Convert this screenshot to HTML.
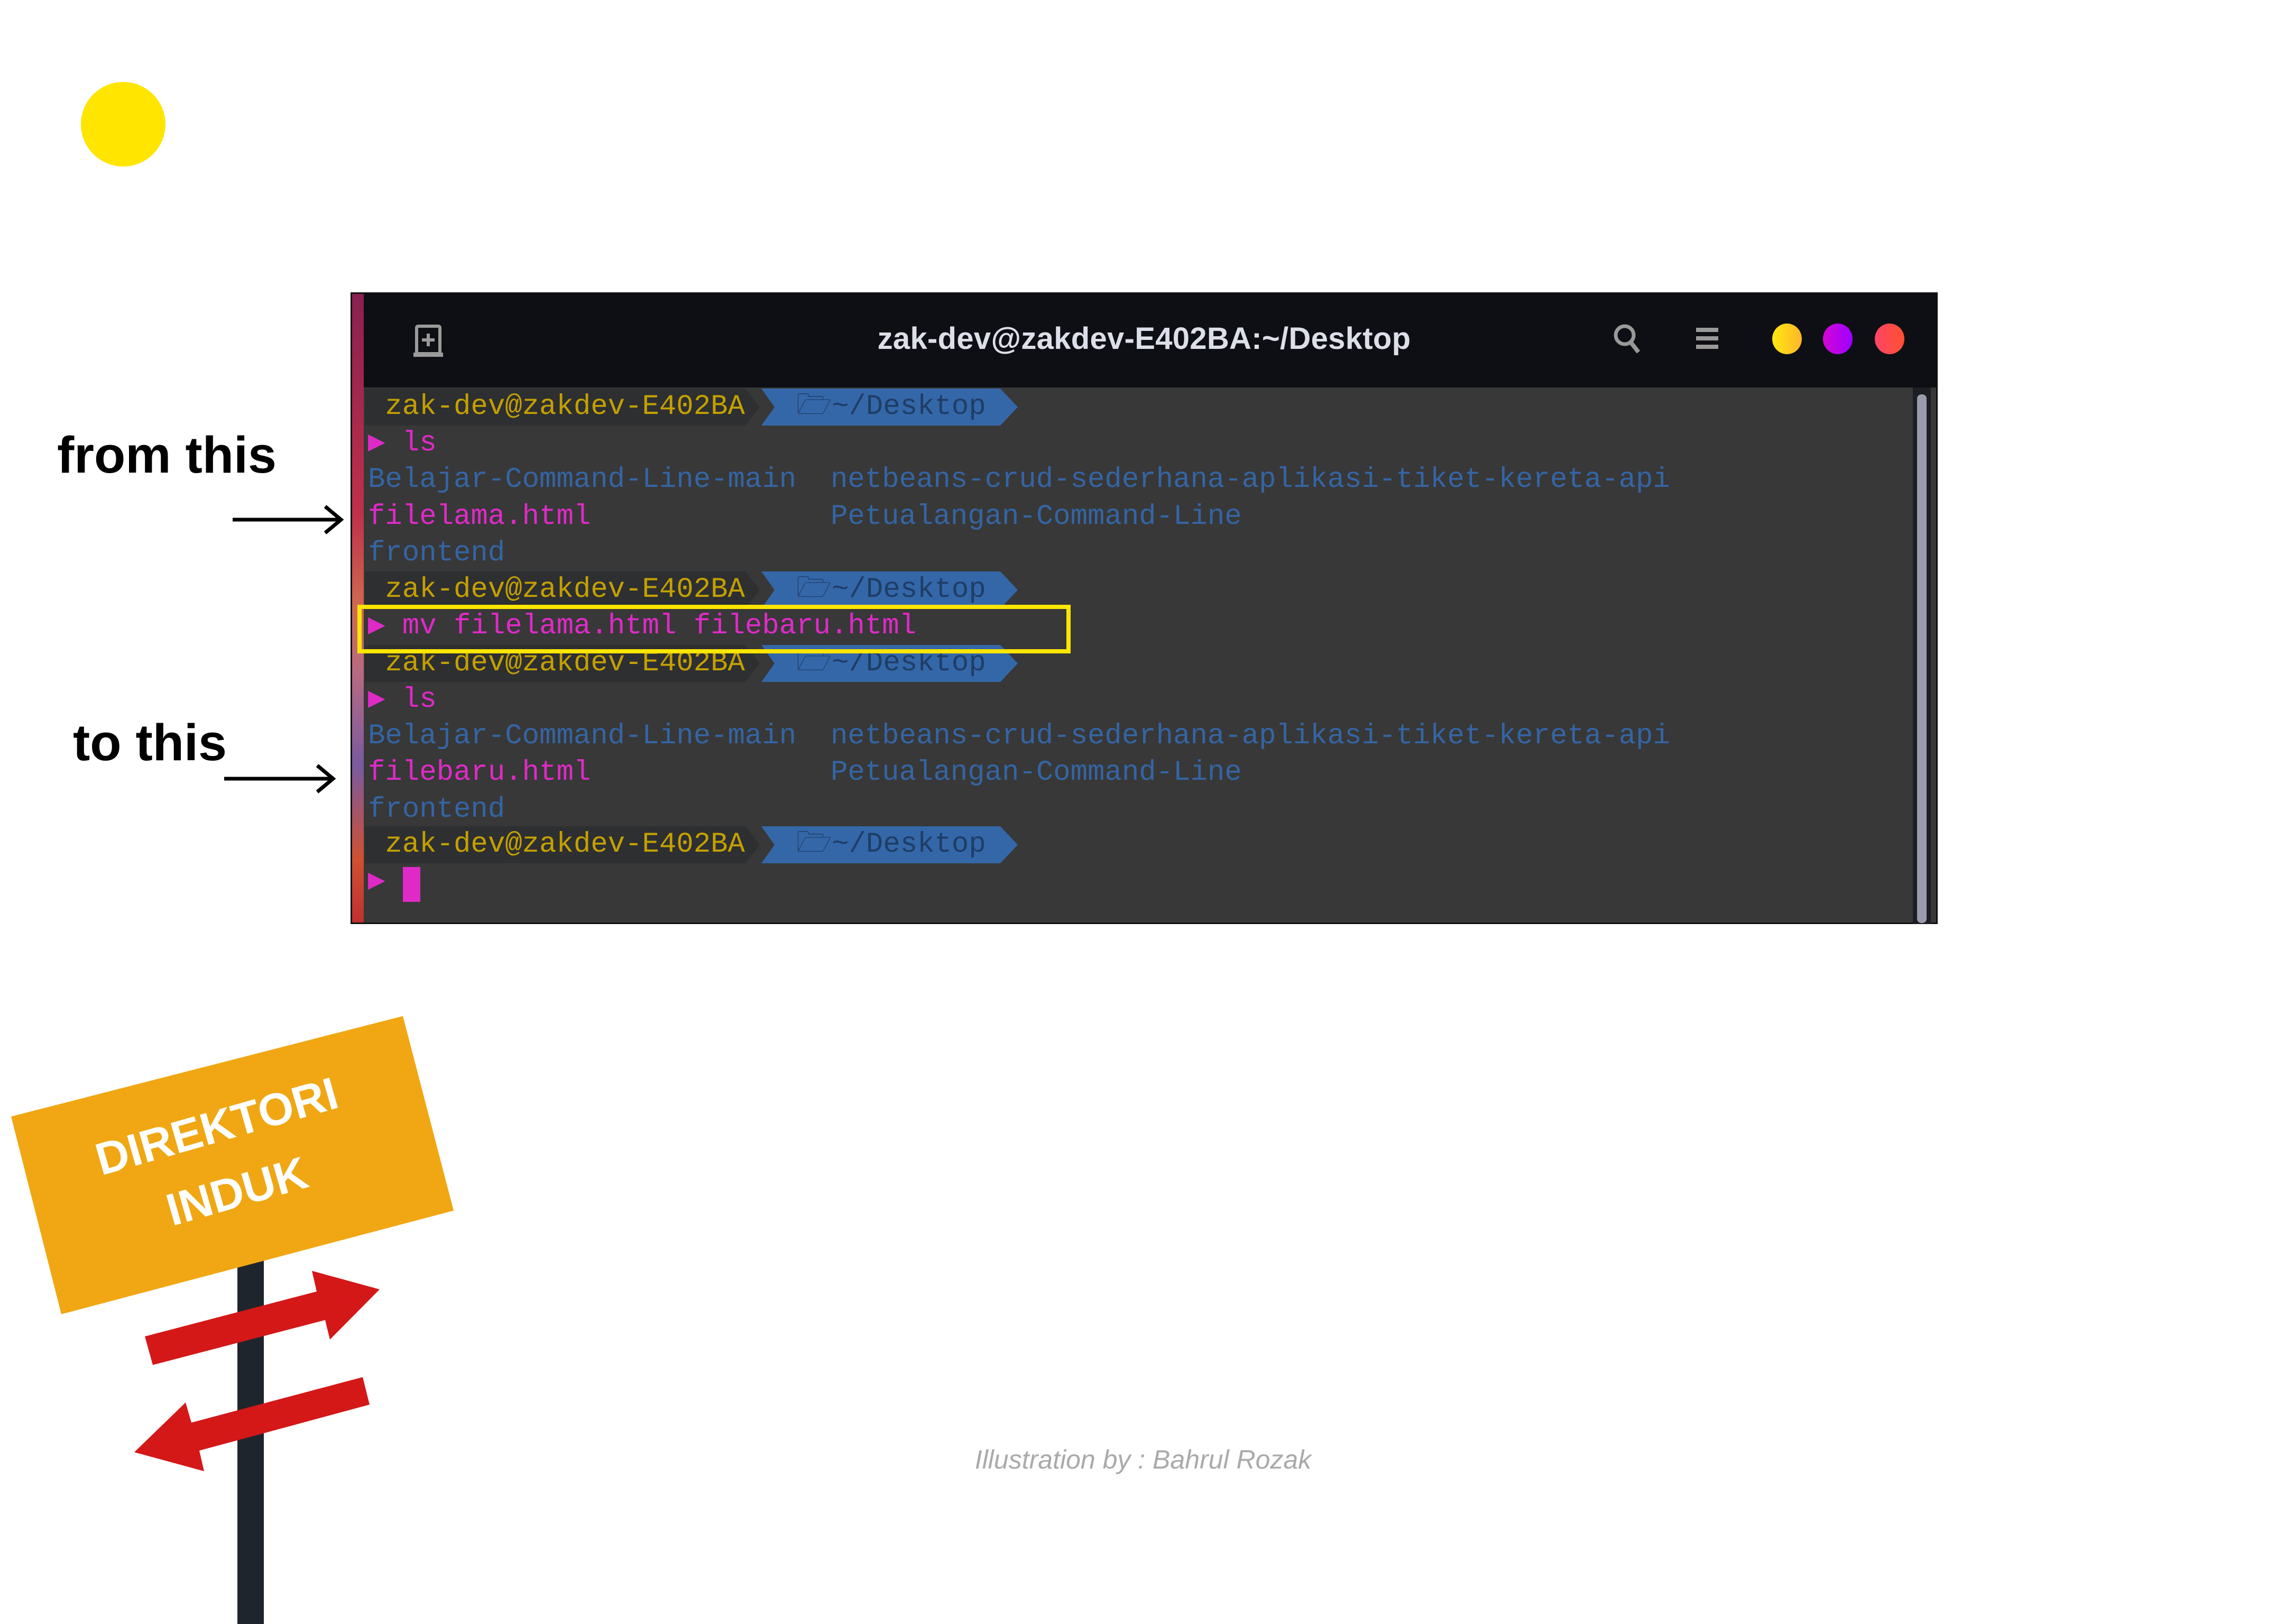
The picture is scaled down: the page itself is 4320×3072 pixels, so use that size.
<!DOCTYPE html>
<html><head><meta charset="utf-8"><style>
html,body{margin:0;padding:0;background:#fff;}
body{width:4320px;height:3072px;position:relative;overflow:hidden;font-family:"Liberation Sans",sans-serif;}
.abs{position:absolute;}
.term{left:663px;top:553px;width:3002px;height:1195px;background:#383838;border:3px solid #111;box-sizing:border-box;}
.tb{left:0;top:0;width:100%;height:177px;background:#0e0f14;}
.row{position:absolute;left:33px;height:69px;line-height:69px;font-family:"Liberation Mono",monospace;font-size:54px;white-space:pre;}
.y{color:#c4a000}.b{color:#3465a4}.m{color:#e02ac8}.db{color:#1f3d66}
</style></head><body>
<div class="abs" style="left:153px;top:155px;width:160px;height:160px;border-radius:50%;background:#ffe500"></div>

<div class="abs" style="left:108px;top:806px;font-size:97px;font-weight:bold;color:#000;line-height:110px">from this</div>
<div class="abs" style="left:138px;top:1350px;font-size:97px;font-weight:bold;color:#000;line-height:110px">to this</div>
<svg class="abs" style="left:0;top:0" width="700" height="1600">
<path d="M440 983 H645 M615 958 L645 983 L615 1008" stroke="#000" stroke-width="7" fill="none"/>
<path d="M424 1473 H630 M600 1448 L630 1473 L600 1498" stroke="#000" stroke-width="7" fill="none"/>
</svg>

<div class="abs term">
 <div class="abs tb"></div>
 <div class="abs" style="left:0;top:0;width:22px;height:100%;background:linear-gradient(#8a2050,#c0304a 35%,#d06a50 50%,#b86a80 60%,#7a5aa0 75%,#d05030 90%,#c03030)"></div>
 <svg class="abs" style="left:110px;top:53px" width="70" height="70"><rect x="12" y="8" width="44" height="52" rx="3" fill="none" stroke="#9a9a9a" stroke-width="6"/><rect x="6" y="58" width="56" height="8" fill="#9a9a9a"/><path d="M34 22v24M22 34h24" stroke="#9a9a9a" stroke-width="6"/></svg>
 <div class="abs" style="left:0;width:100%;top:50px;text-align:center;font-size:58px;font-weight:bold;color:#dcdfe8;line-height:70px;letter-spacing:0.3px">zak-dev@zakdev-E402BA:~/Desktop</div>
 <svg class="abs" style="left:2375px;top:50px" width="80" height="80"><circle cx="32" cy="28" r="17" fill="none" stroke="#999" stroke-width="7"/><path d="M43 41L58 60" stroke="#999" stroke-width="8"/></svg>
 <svg class="abs" style="left:2538px;top:60px" width="60" height="50"><rect x="4" y="4" width="42" height="8" fill="#999"/><rect x="4" y="20" width="42" height="8" fill="#999"/><rect x="4" y="36" width="42" height="8" fill="#999"/></svg>
 <div class="abs" style="left:2686px;top:56px;width:56px;height:58px;border-radius:50%;background:linear-gradient(90deg,#ffe80f,#ffb52a)"></div>
 <div class="abs" style="left:2782px;top:56px;width:56px;height:58px;border-radius:50%;background:linear-gradient(90deg,#d406d4,#9b00ff)"></div>
 <div class="abs" style="left:2880px;top:56px;width:56px;height:58px;border-radius:50%;background:linear-gradient(90deg,#ff4565,#ff5030)"></div>
 <div class="abs" style="left:2952px;top:177px;width:34px;height:1015px;background:#1d1e24"></div>
 <div class="abs" style="left:2960px;top:190px;width:18px;height:1000px;border-radius:8px;background:#9a9cab"></div>
</div>

<svg class="abs" style="left:0;top:0" width="4320" height="1800">
<polygon points="690,735 1410,735 1437,770 1410,805 690,805" fill="#2d2f31"/><polygon points="1440,735 1892,735 1925,770 1892,805 1440,805 1465,770" fill="#3467a8"/>
<polygon points="690,1081 1410,1081 1437,1116 1410,1151 690,1151" fill="#2d2f31"/><polygon points="1440,1081 1892,1081 1925,1116 1892,1151 1440,1151 1465,1116" fill="#3467a8"/>
<polygon points="690,1220 1410,1220 1437,1255 1410,1290 690,1290" fill="#2d2f31"/><polygon points="1440,1220 1892,1220 1925,1255 1892,1290 1440,1290 1465,1255" fill="#3467a8"/>
<polygon points="690,1563 1410,1563 1437,1598 1410,1633 690,1633" fill="#2d2f31"/><polygon points="1440,1563 1892,1563 1925,1598 1892,1633 1440,1633 1465,1598" fill="#3467a8"/>
</svg>
<div class="abs" style="left:663px;top:0;width:3000px;height:1750px">
<div class="row y" style="top:735px"> zak-dev@zakdev-E402BA   <span class="db">🗁~/Desktop</span></div>
<div class="row m" style="top:804px">▶ ls</div>
<div class="row b" style="top:873px">Belajar-Command-Line-main  netbeans-crud-sederhana-aplikasi-tiket-kereta-api</div>
<div class="row b" style="top:943px"><span class="m">filelama.html</span>              Petualangan-Command-Line</div>
<div class="row b" style="top:1012px">frontend</div>
<div class="row y" style="top:1081px"> zak-dev@zakdev-E402BA   <span class="db">🗁~/Desktop</span></div>
<div class="row m" style="top:1150px">▶ mv filelama.html filebaru.html</div>
<div class="row y" style="top:1220px"> zak-dev@zakdev-E402BA   <span class="db">🗁~/Desktop</span></div>
<div class="row m" style="top:1289px">▶ ls</div>
<div class="row b" style="top:1358px">Belajar-Command-Line-main  netbeans-crud-sederhana-aplikasi-tiket-kereta-api</div>
<div class="row b" style="top:1427px"><span class="m">filebaru.html</span>              Petualangan-Command-Line</div>
<div class="row b" style="top:1497px">frontend</div>
<div class="row y" style="top:1563px"> zak-dev@zakdev-E402BA   <span class="db">🗁~/Desktop</span></div>
<div class="row m" style="top:1633px">▶ </div>
</div>
<div class="abs" style="left:762px;top:1640px;width:33px;height:66px;background:#e02ac8"></div>
<div class="abs" style="left:676px;top:1144px;width:1349px;height:92px;border:8px solid #ffe600;box-sizing:border-box"></div>

<svg class="abs" style="left:0;top:1880px" width="1000" height="1192">
<g transform="translate(0,-1880)">
<rect x="449" y="2200" width="50" height="872" fill="#1f252c"/>
<polygon points="21,2112 762,1922 858,2290 116,2486" fill="#f0a713"/>
<polygon points="274,2528 599,2443 590,2404 718,2439 624,2534 615,2497 289,2582" fill="#d41818"/>
<polygon points="686,2605 699,2657 377,2744 386,2783 254,2747 351,2653 362,2691" fill="#d41818"/>
<text x="410" y="2160" transform="rotate(-16 410 2131)" text-anchor="middle" font-family="Liberation Sans,sans-serif" font-weight="bold" font-size="86" fill="#fff">DIREKTORI</text>
<text x="448" y="2283" transform="rotate(-16 448 2253)" text-anchor="middle" font-family="Liberation Sans,sans-serif" font-weight="bold" font-size="86" fill="#fff">INDUK</text>
</g>
</svg>

<div class="abs" style="left:1690px;top:2732px;width:944px;text-align:center;font-size:50px;font-style:italic;color:#aaa">Illustration by : Bahrul Rozak</div>
</body></html>
